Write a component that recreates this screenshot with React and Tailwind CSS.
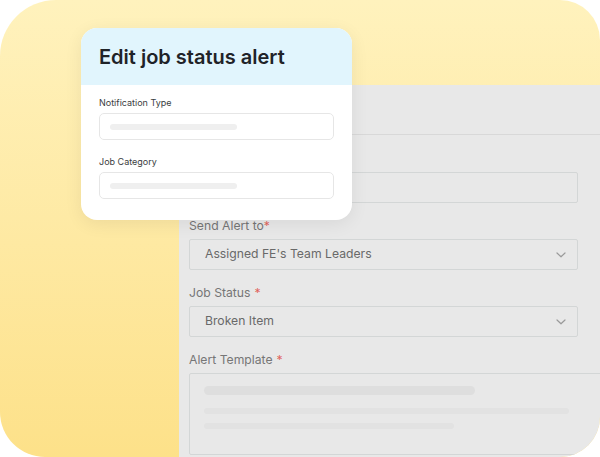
import React from 'react';

function Chevron() {
  return (
    <svg width="10" height="6" viewBox="0 0 10 6" className="shrink-0">
      <polyline points="1,1 5,4.8 9,1" fill="none" stroke="#9a9a9a" strokeWidth="1.2" strokeLinecap="round" strokeLinejoin="round" />
    </svg>
  );
}

function Label({ children, required, gap = true }) {
  return (
    <div className="h-[16px] mb-[5px] text-[12.2px] leading-[16px] text-[#767676]">
      {children}
      {required && <span className={`text-[#e0625a] ${gap ? 'ml-[4px]' : ''}`}>*</span>}
    </div>
  );
}

function SelectBox({ value }) {
  return (
    <div className="h-[31px] border border-[#d3d6d6] rounded-[2px] flex items-center justify-between pl-[15px] pr-[11px] text-[12.2px] text-[#696969]">
      <span>{value}</span>
      <Chevron />
    </div>
  );
}

function CardField({ label }) {
  return (
    <div>
      <div className="h-[12px] leading-[12px] mb-[4px] text-[9px] text-[#3a3d41]">{label}</div>
      <div className="h-[27px] border border-[#e6e6e6] rounded-[5px] flex items-center pl-[10px]">
        <div className="w-[127px] h-[6px] rounded-full bg-[#efefef]" />
      </div>
    </div>
  );
}

export default function App() {
  return (
    <div className="w-[600px] h-[457px] bg-white" style={{ fontFamily: 'Inter, "Noto Sans", sans-serif' }}>
      <div className="relative w-full h-full overflow-hidden rounded-tl-[56px] rounded-tr-[40px] rounded-bl-[45px] rounded-br-[40px] bg-gradient-to-b from-[#fff2bd] to-[#fde189] pl-[179px] pt-[85px]">
        <div className="h-full bg-[#e8e8e8] flex flex-col">
          <div className="h-[50px] border-b border-[#d8d8d8] flex items-center pl-[10px]">
            <div className="w-[175px] overflow-hidden whitespace-nowrap text-[15px] text-[#6d6d6d]">Edit job status alert:</div>
          </div>
          <div className="pl-[10px] pr-[22px] pt-[16px] flex flex-col">
            <Label required>Name</Label>
            <div className="h-[31px] border border-[#d3d6d6] rounded-[2px]" />
            <div className="mt-[15px]">
              <Label required gap={false}>Send Alert to</Label>
              <SelectBox value="Assigned FE's Team Leaders" />
            </div>
            <div className="mt-[15px]">
              <Label required>Job Status</Label>
              <SelectBox value="Broken Item" />
            </div>
            <div className="mt-[15px]">
              <Label required>Alert Template</Label>
              <div className="h-[82px] mr-[-60px] border border-[#d3d6d6] rounded-[2px] pl-[14px] pt-[12px] flex flex-col">
                <div className="w-[271px] h-[9px] rounded-full bg-[#dedede]" />
                <div className="w-[365px] h-[6px] rounded-full bg-[#e2e2e2] mt-[13px]" />
                <div className="w-[250px] h-[6px] rounded-full bg-[#e2e2e2] mt-[9px]" />
              </div>
            </div>
          </div>
        </div>

        <div className="absolute left-[81px] top-[28px] w-[271px] rounded-[16px] bg-white overflow-hidden shadow-[0_4px_18px_rgba(0,0,0,0.07)]">
          <div className="h-[57px] bg-[#e1f5fd] flex items-center px-[18px]">
            <h1 className="text-[20px] font-semibold text-[#1f2328]">Edit job status alert</h1>
          </div>
          <div className="px-[18px] pt-[12px] pb-[21px] flex flex-col gap-[16px]">
            <CardField label="Notification Type" />
            <CardField label="Job Category" />
          </div>
        </div>
      </div>
    </div>
  );
}
